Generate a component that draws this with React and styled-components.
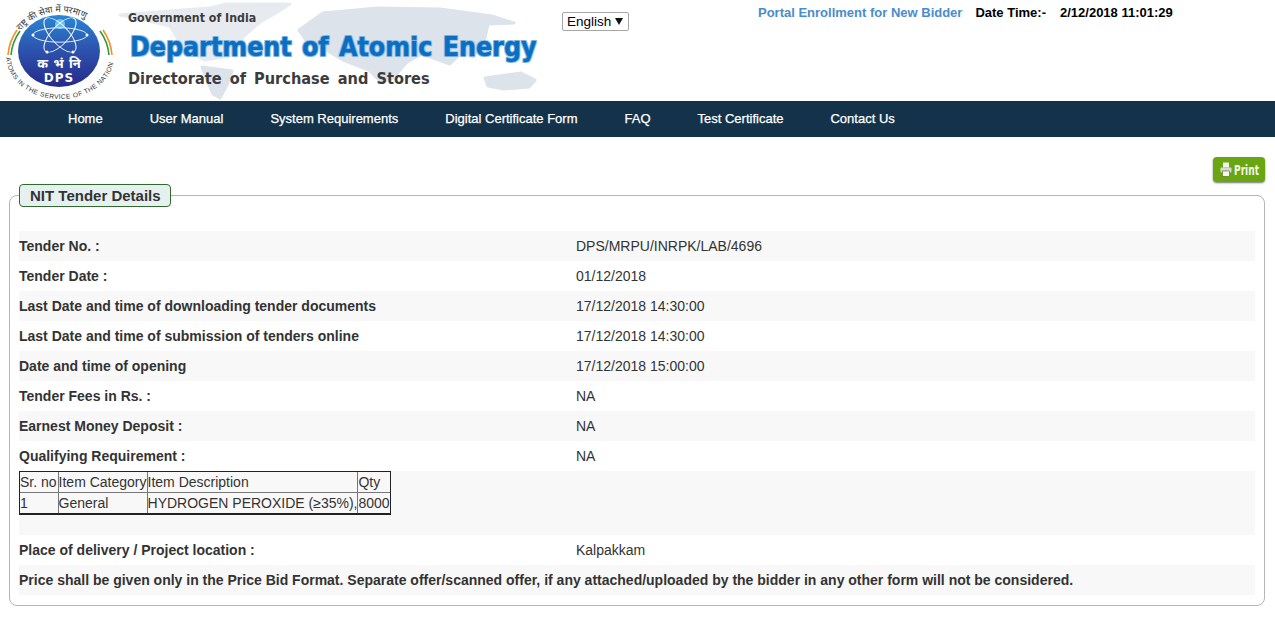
import React from "react";
import styled, { createGlobalStyle } from "styled-components";

const GlobalStyle = createGlobalStyle`
  html, body {
    margin: 0;
    padding: 0;
    background: #fff;
    font-family: "Liberation Sans", Arial, sans-serif;
    font-size: 14px;
    color: #333;
  }
`;

const Header = styled.header`
  position: relative;
  height: 101px;
  display: flex;
  overflow: hidden;
`;

const MapBack = styled.svg`
  position: absolute;
  left: 110px;
  top: 0;
  width: 440px;
  height: 101px;
`;

const LogoBox = styled.div`
  width: 128px;
  flex: none;
`;

const Titles = styled.div`
  position: relative;
  width: 434px;
  flex: none;
  font-family: "DejaVu Sans Condensed", "DejaVu Sans", Verdana, sans-serif;
  font-weight: 700;
  color: #3c3c3c;
`;

const GovLine = styled.div`
  font-size: 12.3px;
  line-height: 14px;
  margin-top: 11px;
`;

const DeptLine = styled.div`
  font-size: 26.5px;
  line-height: 32px;
  margin: 6px 0 0 2px;
  color: #0a6fc2;
  word-spacing: 2px;
  white-space: nowrap;
  -webkit-text-stroke: 0.4px #0a6fc2;
  text-shadow: 1px 1px 0 #9ec6e8, -1px -1px 0 #9ec6e8, 1px -1px 0 #9ec6e8, -1px 1px 0 #9ec6e8;
`;

const DirLine = styled.div`
  font-size: 16.2px;
  line-height: 20px;
  margin-top: 6px;
  word-spacing: 3px;
  white-space: nowrap;
`;

const LangSelect = styled.div`
  align-self: flex-start;
  margin-top: 12px;
  width: 67px;
  height: 19px;
  box-sizing: border-box;
  border: 1px solid #a6a6a6;
  border-radius: 2px;
  display: flex;
  align-items: center;
  justify-content: space-between;
  padding: 0 5px 1px 4px;
  color: #000;
  font-size: 13.5px;
`;

const Caret = styled.span`
  width: 0;
  height: 0;
  border-left: 4px solid transparent;
  border-right: 4px solid transparent;
  border-top: 7px solid #111;
`;

const HeaderInfo = styled.div`
  flex: none;
  margin: 5px 0 0 129px;
  display: flex;
  align-items: baseline;
  font-size: 13px;
  line-height: 16px;
  font-weight: 700;
  white-space: nowrap;
  color: #000;
`;

const EnrollLink = styled.a`
  color: #4a8ccb;
  margin-right: 13px;
`;

const DateValue = styled.span`
  margin-left: 14px;
`;

const Nav = styled.nav`
  height: 36px;
  box-sizing: border-box;
  padding: 0 0 2px 68px;
  background: #14334a;
  display: flex;
  align-items: center;
  gap: 47px;
`;

const NavItem = styled.a`
  color: #fff;
  font-size: 13px;
  -webkit-text-stroke: 0.25px #fff;
  white-space: nowrap;
`;

const PrintBar = styled.div`
  display: flex;
  justify-content: flex-end;
  padding: 20px 10px 0 0;
`;

const PrintButton = styled.button`
  width: 52px;
  height: 25px;
  padding: 0;
  border: 0;
  border-radius: 4px;
  background: #6aa512;
  box-shadow: 0 1px 2px rgba(0, 0, 0, 0.55);
  color: #f2f6e8;
  font-family: "DejaVu Sans Condensed", "DejaVu Sans", sans-serif;
  font-size: 14px;
  font-weight: 700;
  display: flex;
  align-items: center;
  justify-content: center;
  gap: 2px;
`;

const PrintLabel = styled.span`
  display: inline-block;
  transform: scaleX(0.72);
  transform-origin: left center;
  width: 24px;
  text-align: left;
`;

const Fieldset = styled.fieldset`
  margin: 2px 10px 0 9px;
  padding: 24px 9px 10px 9px;
  border: 1px solid #b5b5b5;
  border-radius: 8px;
  min-width: 0;
`;

const Legend = styled.legend`
  box-sizing: border-box;
  height: 23px;
  width: 152px;
  margin-right: 13px;
  padding: 0 0 0 10px;
  background: #e6f1ef;
  border: 1px solid #2f6b2f;
  border-radius: 4px;
  font-size: 15px;
  font-weight: 700;
  color: #333;
  line-height: 21px;
`;

const Row = styled.div`
  display: flex;
  align-items: center;
  min-height: 30px;
  background: ${(props) => (props.$shaded ? "#f8f8f8" : "#fff")};
`;

const Label = styled.div`
  width: 557px;
  flex: none;
  font-weight: 700;
`;

const Value = styled.div`
  flex: 1;
`;

const Notice = styled.div`
  font-weight: 700;
`;

const TableRow = styled.div`
  height: 64px;
  background: #f8f8f8;
`;

const ItemTable = styled.table`
  border-collapse: separate;
  border-spacing: 0;
  border: 1px solid #222;
  border-bottom-width: 2px;
  font-size: 14px;
  color: #333;
  & td {
    border-right: 1px solid #777;
    border-bottom: 1px solid #777;
    padding: 0;
    height: 20px;
    line-height: 16px;
    white-space: nowrap;
  }
  & td:first-child {
    padding-right: 1px;
  }
  & td:last-child {
    border-right: 0;
  }
  & tr:last-child td {
    border-bottom: 0;
  }
`;

const Logo = () => (
  <svg width="120" height="101" viewBox="0 0 120 101">
    <defs>
      <linearGradient id="globe" x1="0" y1="0" x2="0" y2="1">
        <stop offset="0%" stopColor="#2a86d6" />
        <stop offset="45%" stopColor="#2c56b0" />
        <stop offset="100%" stopColor="#26298a" />
      </linearGradient>
      <path id="topArc" d="M15 38 A 52 52 0 0 1 105 38" />
      <path id="botArc" d="M6 56 A 54 43 0 0 0 114 56" />
    </defs>
    <path d="M17 30 A 50 50 0 0 0 8 55" fill="none" stroke="#f0912c" strokeWidth="1.6" />
    <path d="M20 31 A 48 48 0 0 0 11 55" fill="none" stroke="#2f9a3c" strokeWidth="1.6" />
    <path d="M103 30 A 50 50 0 0 1 112 55" fill="none" stroke="#f0912c" strokeWidth="1.6" />
    <path d="M100 31 A 48 48 0 0 1 109 55" fill="none" stroke="#2f9a3c" strokeWidth="1.6" />
    <ellipse cx="59" cy="51" rx="41" ry="36" fill="url(#globe)" />
    <circle cx="60" cy="24" r="5" fill="#6cc0ee" />
    <g transform="translate(60 35) scale(1 0.72)" fill="none" stroke="#fff" strokeWidth="1">
      <ellipse rx="27" ry="10" />
      <ellipse rx="27" ry="10" transform="rotate(60)" />
      <ellipse rx="27" ry="10" transform="rotate(-60)" />
    </g>
    <g fill="#fff">
      <circle cx="33" cy="35" r="1.5" />
      <circle cx="87" cy="35" r="1.5" />
      <circle cx="47" cy="52" r="1.5" />
      <circle cx="73" cy="52" r="1.5" />
    </g>
    <text x="59" y="68" textAnchor="middle" fontFamily="'Noto Sans','DejaVu Sans',sans-serif" fontSize="13" fontWeight="700" wordSpacing="2" fill="#fff">क भं नि</text>
    <text x="59" y="82" textAnchor="middle" fontFamily="'DejaVu Sans',sans-serif" fontWeight="700" fontSize="12" letterSpacing="1" fill="#fff">DPS</text>
    <text fontFamily="'Noto Sans','DejaVu Sans',sans-serif" fontSize="9" fill="#333">
      <textPath href="#topArc" startOffset="8%">राष्ट्र की सेवा में परमाणु</textPath>
    </text>
    <text fontFamily="'Liberation Sans',sans-serif" fontSize="6.6" letterSpacing="0.45" fill="#333">
      <textPath href="#botArc" startOffset="1%">ATOMS IN THE SERVICE OF THE NATION</textPath>
    </text>
  </svg>
);

const WorldMap = () => (
  <MapBack viewBox="0 0 440 101">
    <g fill="#dde3eb" stroke="#dde3eb" strokeWidth="3" strokeLinejoin="round">
      <path d="M10 15 L60 11 L100 8 L116 4 L180 4 L166 13 L150 22 L134 36 L120 56 L94 60 L72 46 L60 26 L26 18 Z" opacity="0.7" />
      <path d="M92 67 L122 71 L117 85 L110 98 L103 94 L97 80 Z" />
      <path d="M189 30 L213 13 L267 8 L330 9 L382 16 L404 23 L378 24 L375 38 L363 57 L352 52 L340 64 L326 59 L312 54 L297 62 L283 78 L271 82 L259 70 L233 60 L213 48 L197 42 Z" />
      <path d="M375 78 L411 73 L425 80 L419 87 L394 89 L378 86 Z" />
    </g>
  </MapBack>
);

const PrinterIcon = () => (
  <svg width="12" height="15" viewBox="0 0 12 15">
    <rect x="3" y="0.5" width="6" height="5" fill="#eef2ea" />
    <rect x="0.5" y="5.5" width="11" height="5" rx="1" fill="#d5dbd0" />
    <rect x="2.5" y="9" width="7" height="5.5" fill="#f5f7f2" stroke="#52660f" strokeWidth="0.6" />
  </svg>
);

const navItems = [
  "Home",
  "User Manual",
  "System Requirements",
  "Digital Certificate Form",
  "FAQ",
  "Test Certificate",
  "Contact Us",
];

const rowsTop = [
  ["Tender No. :", "DPS/MRPU/INRPK/LAB/4696"],
  ["Tender Date :", "01/12/2018"],
  ["Last Date and time of downloading tender documents", "17/12/2018 14:30:00"],
  ["Last Date and time of submission of tenders online", "17/12/2018 14:30:00"],
  ["Date and time of opening", "17/12/2018 15:00:00"],
  ["Tender Fees in Rs. :", "NA"],
  ["Earnest Money Deposit :", "NA"],
  ["Qualifying Requirement :", "NA"],
];

const App = () => (
  <>
    <GlobalStyle />
    <Header>
      <WorldMap />
      <LogoBox>
        <Logo />
      </LogoBox>
      <Titles>
        <GovLine>Government of India</GovLine>
        <DeptLine>Department of Atomic Energy</DeptLine>
        <DirLine>Directorate of Purchase and Stores</DirLine>
      </Titles>
      <LangSelect>
        English
        <Caret />
      </LangSelect>
      <HeaderInfo>
        <EnrollLink>Portal Enrollment for New Bidder</EnrollLink>
        Date Time:-
        <DateValue>2/12/2018 11:01:29</DateValue>
      </HeaderInfo>
    </Header>
    <Nav>
      {navItems.map((item) => (
        <NavItem key={item}>{item}</NavItem>
      ))}
    </Nav>
    <PrintBar>
      <PrintButton>
        <PrinterIcon />
        <PrintLabel>Print</PrintLabel>
      </PrintButton>
    </PrintBar>
    <Fieldset>
      <Legend>NIT Tender Details</Legend>
      {rowsTop.map(([label, value], i) => (
        <Row key={label} $shaded={i % 2 === 0}>
          <Label>{label}</Label>
          <Value>{value}</Value>
        </Row>
      ))}
      <TableRow>
        <ItemTable>
          <tbody>
            <tr>
              <td>Sr. no</td>
              <td>Item Category</td>
              <td>Item Description</td>
              <td>Qty</td>
            </tr>
            <tr>
              <td>1</td>
              <td>General</td>
              <td>HYDROGEN PEROXIDE (≥35%),</td>
              <td>8000</td>
            </tr>
          </tbody>
        </ItemTable>
      </TableRow>
      <Row>
        <Label>Place of delivery / Project location :</Label>
        <Value>Kalpakkam</Value>
      </Row>
      <Row $shaded>
        <Notice>
          Price shall be given only in the Price Bid Format. Separate offer/scanned offer, if any attached/uploaded by the bidder in any other form will not be considered.
        </Notice>
      </Row>
    </Fieldset>
  </>
);

export default App;
